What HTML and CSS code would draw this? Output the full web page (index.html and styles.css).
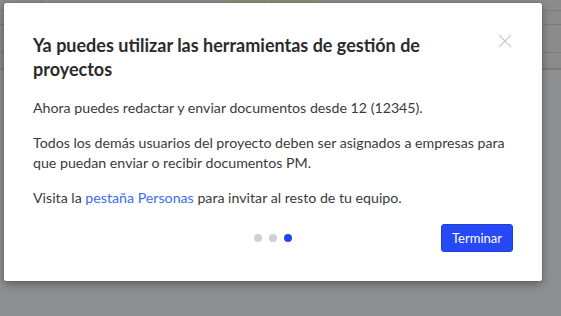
FILE: index.html
```html
<!DOCTYPE html>
<html lang="es">
<head>
<meta charset="utf-8">
<title>Herramientas de gestión de proyectos</title>
<link rel="stylesheet" href="styles.css">
</head>
<body>
<div class="app">
  <div class="topbar">
    <div class="tb-a"></div>
    <div class="tb-b"></div>
    <div class="tb-tan"><div class="tan-l"></div><div class="tan-r"></div></div>
    <div class="tb-c"></div>
  </div>
  <div class="row r1"></div>
  <div class="row r2"></div>
  <div class="row r3"></div>
  <div class="row r4"></div>
  <div class="rest"></div>
</div>
<div class="modal" role="dialog">
  <button class="close" aria-label="Cerrar">
    <svg width="14" height="14" viewBox="0 0 14 14"><path d="M1 1L13 13M13 1L1 13" stroke="#c9c9c9" stroke-width="1.1" fill="none"/></svg>
  </button>
  <h2 class="title">Ya puedes utilizar las herramientas de gestión de proyectos</h2>
  <p class="text">Ahora puedes redactar y enviar documentos desde 12 (12345).</p>
  <p class="text">Todos los demás usuarios del proyecto deben ser asignados a empresas para que puedan enviar o recibir documentos PM.</p>
  <p class="text">Visita la <a href="#" class="link">pestaña Personas</a> para invitar al resto de tu equipo.</p>
  <div class="footer">
    <div class="dots"><span class="dot"></span><span class="dot"></span><span class="dot active"></span></div>
    <button class="btn">Terminar</button>
  </div>
</div>
</body>
</html>
```
FILE: styles.css
```css
* { box-sizing: border-box; }
html, body { margin: 0; padding: 0; }
body {
  width: 561px;
  height: 316px;
  overflow: hidden;
  font-family: Lato, "Noto Sans", sans-serif;
  background: #8f9091;
  position: relative;
}
.app { width: 561px; height: 316px; display: flex; flex-direction: column; }
.topbar { height: 11px; display: flex; border-bottom: 1px solid #7f7f7f; background: #8c8c8c; }
.tb-a { width: 42px; border-right: 1px solid #7c7c7c; }
.tb-b { width: 188px; }
.tb-tan { width: 86px; display: flex; background: #8f8a73; }
.tan-l { width: 35px; border-right: 1px solid #847f6a; }
.tan-r { flex: 1; }
.tb-c { flex: 1; }
.row { border-bottom: 1px solid #7c7c7c; background: #8b8b8b; }
.r1 { height: 14px; }
.r2 { height: 28px; }
.r3 { height: 16px; }
.r4 { height: 0; }
.rest { flex: 1; background: #8e8f90; }
.modal {
  position: absolute;
  left: 4px;
  top: 3px;
  width: 538px;
  height: 278px;
  background: #fff;
  padding: 30px 29px 0 29px;
  box-shadow: 0 3px 10px rgba(0,0,0,0.35), 0 0 1px rgba(0,0,0,0.6);
  border-radius: 2px;
}
.close {
  position: absolute;
  right: 30px;
  top: 31px;
  width: 14px;
  height: 14px;
  padding: 0;
  border: 0;
  background: none;
  display: flex;
}
.title {
  margin: 0 0 17px 0;
  width: 420px;
  font-size: 18px;
  line-height: 24px;
  font-weight: 700;
  color: #2b2b2b;
}
.text {
  margin: 0 0 15px 0;
  font-size: 14.2px;
  line-height: 20px;
  color: #3b3b3b;
}
.link { color: #3c6cf4; text-decoration: none; }
.footer {
  display: flex;
  align-items: center;
  justify-content: flex-end;
  position: relative;
  margin-top: 16px;
  height: 28px;
}
.dots {
  position: absolute;
  left: 221px;
  top: 10px;
  display: flex;
  gap: 7px;
}
.dot { width: 8px; height: 8px; border-radius: 50%; background: #cfd0d4; }
.dot.active { background: #1e47f0; }
.btn {
  width: 72px;
  height: 28px;
  border: 1px solid #1d3fd8;
  border-radius: 3px;
  background: #2649f5;
  color: #fff;
  font-family: Lato, "Noto Sans", sans-serif;
  font-size: 13px;
  padding: 0;
}
```
